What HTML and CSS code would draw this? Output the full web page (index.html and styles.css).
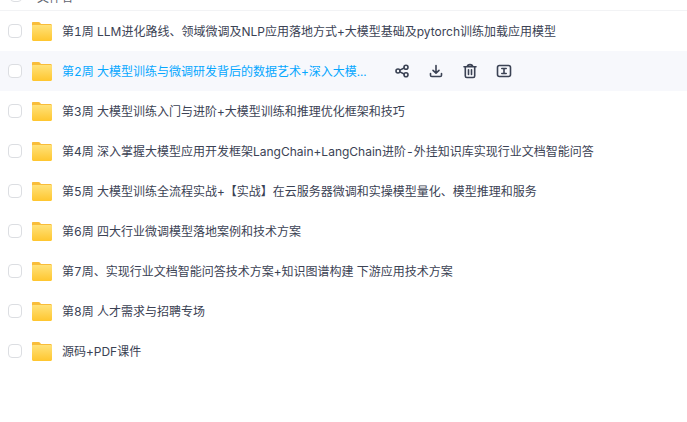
FILE: index.html
```html
<!DOCTYPE html>
<html lang="en">
<head>
    <meta charset="UTF-8">
    <title>文件列表</title>
    <link rel="stylesheet" href="styles.css">
</head>
<body>
    <svg class="sprites" width="0" height="0">
        <symbol id="folder" viewBox="0 0 20 19">
            <path d="M1 0h5.500c.7 0 1.200.3 1.600.8L9 2h9.500c.8 0 1.500.7 1.500 1.500V5H0V1c0-.6.4-1 1-1z" fill="#f9bd3a"/>
            <path d="M1.200 3h17.600c.7 0 1.200.5 1.200 1.200v13.300c0 .8-.7 1.500-1.500 1.500h-17C.7 19 0 18.300 0 17.500V4.200C0 3.500.5 3 1.200 3z" fill="url(#fold)"/>
        </symbol>
        <linearGradient id="fold" x1="0" y1="0" x2="0" y2="1">
            <stop offset="0" stop-color="#ffe27a"/>
            <stop offset="1" stop-color="#ffc62e"/>
        </linearGradient>
    </svg>

    <div class="top-stub">
        <span class="check"></span>
        <span class="stub-title">文件名</span>
    </div>

    <ul class="file-list">
        <li class="file-row">
            <span class="check"></span>
            <svg class="folder"><use href="#folder"/></svg>
            <span class="name">第1周 LLM进化路线、领域微调及NLP应用落地方式+大模型基础及pytorch训练加载应用模型</span>
        </li>
        <li class="file-row active">
            <span class="check"></span>
            <svg class="folder"><use href="#folder"/></svg>
            <span class="name">第2周 大模型训练与微调研发背后的数据艺术+深入大模...</span>
            <div class="actions">
                <svg viewBox="0 0 16 16"><circle cx="4" cy="8" r="2"/><circle cx="12" cy="4.200" r="2"/><circle cx="12" cy="11.800" r="2"/><path d="M5.800 7.100l4.400-2.100M5.800 8.900l4.400 2.100"/></svg>
                <svg viewBox="0 0 16 16"><path d="M8 2.500v7.500M5 7.300L8 10.200 11 7.300M2.500 10.500v1.700c0 .8.600 1.300 1.300 1.300h8.400c.7 0 1.300-.5 1.300-1.300v-1.700"/></svg>
                <svg viewBox="0 0 16 16"><path d="M2 3.800h12M5.200 3.800C5.400 2.300 6.500 1.600 8 1.600s2.600.7 2.800 2.200M3.300 3.800v9.200c0 .9.600 1.500 1.500 1.500h6.400c.9 0 1.500-.6 1.500-1.500V3.800M6.500 6.800v4.700M9.500 6.800v4.700"/></svg>
                <svg viewBox="0 0 16 16"><rect x="1.500" y="2.500" width="13" height="11" rx="2"/><path d="M5.800 5.500h4.400M5.800 10.500h4.400M8 5.500v5"/></svg>
            </div>
        </li>
        <li class="file-row">
            <span class="check"></span>
            <svg class="folder"><use href="#folder"/></svg>
            <span class="name">第3周 大模型训练入门与进阶+大模型训练和推理优化框架和技巧</span>
        </li>
        <li class="file-row">
            <span class="check"></span>
            <svg class="folder"><use href="#folder"/></svg>
            <span class="name">第4周 深入掌握大模型应用开发框架LangChain+LangChain进阶-外挂知识库实现行业文档智能问答</span>
        </li>
        <li class="file-row">
            <span class="check"></span>
            <svg class="folder"><use href="#folder"/></svg>
            <span class="name">第5周 大模型训练全流程实战+【实战】在云服务器微调和实操模型量化、模型推理和服务</span>
        </li>
        <li class="file-row">
            <span class="check"></span>
            <svg class="folder"><use href="#folder"/></svg>
            <span class="name">第6周 四大行业微调模型落地案例和技术方案</span>
        </li>
        <li class="file-row">
            <span class="check"></span>
            <svg class="folder"><use href="#folder"/></svg>
            <span class="name">第7周、实现行业文档智能问答技术方案+知识图谱构建 下游应用技术方案</span>
        </li>
        <li class="file-row">
            <span class="check"></span>
            <svg class="folder"><use href="#folder"/></svg>
            <span class="name">第8周 人才需求与招聘专场</span>
        </li>
        <li class="file-row">
            <span class="check"></span>
            <svg class="folder"><use href="#folder"/></svg>
            <span class="name">源码+PDF课件</span>
        </li>
    </ul>
</body>
</html>
```

FILE: styles.css
```css
html, body {
    margin: 0;
    padding: 0;
    height: 100%;
    overflow: hidden;
    background: #fff;
    font-family: Inter, "Noto Sans CJK SC", sans-serif;
    font-variant-numeric: tabular-nums;
    color: #3b4254;
}

.sprites {
    display: block;
    height: 0;
}

.top-stub {
    display: flex;
    align-items: flex-end;
    box-sizing: content-box;
    height: 2px;
    padding: 0 0 8px 10px;
    border-bottom: 1px solid #f2f3f5;
    overflow: hidden;
    font-size: 12px;
    color: #60646f;
}

.top-stub .check {
    flex: none;
    width: 12px;
}

.stub-title {
    margin: 0 0 -3px 15px;
    line-height: 14px;
    white-space: nowrap;
}

.file-list {
    list-style: none;
    margin: 0;
    padding: 0;
}

.file-row {
    display: flex;
    align-items: center;
    height: 40px;
    padding-left: 8px;
}

.file-row.active {
    background: #f7f8fc;
}

.check {
    width: 14px;
    height: 14px;
    box-sizing: border-box;
    border: 1px solid #dcdee2;
    border-radius: 4px;
    background: #fff;
}

.folder {
    width: 20px;
    height: 19px;
    margin-left: 10px;
}

.name {
    margin: 2px 0 0 10px;
    font-size: 12px;
    line-height: 20px;
    white-space: nowrap;
}

.active .name {
    color: #06a7ff;
}

.actions {
    display: flex;
    gap: 18px;
    margin-left: 28px;
}

.actions svg {
    width: 16px;
    height: 16px;
    fill: none;
    stroke: #3b4254;
    stroke-width: 1.600;
    stroke-linecap: round;
    stroke-linejoin: round;
}
```
